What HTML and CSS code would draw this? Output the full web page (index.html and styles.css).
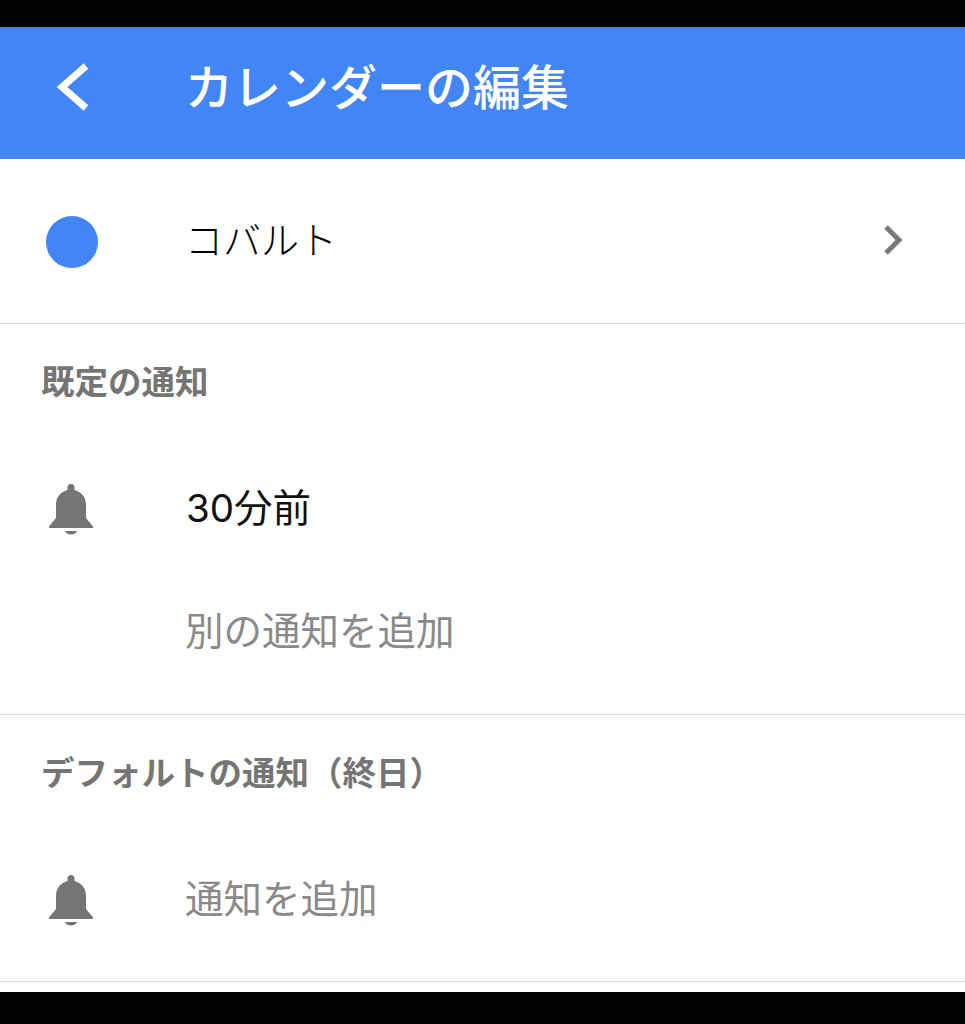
FILE: index.html
```html
<!DOCTYPE html>
<html lang="ja">
<head>
<meta charset="utf-8">
<title>カレンダーの編集</title>
<link rel="stylesheet" href="styles.css">
</head>
<body>
<div class="screen">
  <header class="appbar">
    <svg class="back" viewBox="0 0 40 52" width="40" height="52"><path d="M33 5 L9 26 L33 47" fill="none" stroke="#fff" stroke-width="7"/></svg>
    <h1 class="title">カレンダーの編集</h1>
  </header>
  <section class="color-row">
    <span class="slot"><span class="dot"></span></span>
    <span class="color-name">コバルト</span>
    <svg class="chev" viewBox="0 0 24 36" width="24" height="36"><path d="M4 5 L17 18 L4 31" fill="none" stroke="#7a7a7a" stroke-width="5"/></svg>
  </section>
  <section class="group group-timed">
    <h2 class="group-title">既定の通知</h2>
    <div class="item item-first">
      <span class="slot"><svg class="bell" viewBox="0 0 48 54" width="48" height="54"><use href="#bell"/></svg></span>
      <span class="value">30分前</span>
    </div>
    <div class="item item-add">
      <span class="slot"></span>
      <span class="muted">別の通知を追加</span>
    </div>
  </section>
  <section class="group group-allday">
    <h2 class="group-title">デフォルトの通知（終日）</h2>
    <div class="item item-first">
      <span class="slot"><svg class="bell" viewBox="0 0 48 54" width="48" height="54"><use href="#bell"/></svg></span>
      <span class="muted">通知を追加</span>
    </div>
  </section>
  <div class="tail"></div>
</div>
<svg class="defs" width="0" height="0"><defs><symbol id="bell" viewBox="0 0 48 54"><path fill="#757575" d="M20.500 5.500a3.500 3.500 0 0 1 7 0V8C35 10 39 15.500 39 23V36L46 44.500V46H2V44.500L9 36V23C9 15.500 13 10 20.500 8Z"/><path fill="#757575" d="M18 49H30C29 53.500 19 53.500 18 49Z"/></symbol></defs></svg>
</body>
</html>
```
FILE: styles.css
```css
* { box-sizing: border-box; }
html, body { margin: 0; padding: 0; background: #000; }
.screen {
  width: 965px;
  height: 1024px;
  padding: 27px 0 32px;
  background: #000;
  font-family: Inter, "Noto Sans CJK JP", sans-serif;
  overflow: hidden;
}
.appbar {
  height: 132px;
  background: #4285f4;
  display: flex;
  align-items: center;
  padding: 0 0 12px 53px;
}
.back { width: 40px; flex: none; }
.title {
  margin: 2px 0 0 92px;
  font-size: 48px;
  font-weight: 500;
  color: #fff;
  line-height: 1;
}
.color-row {
  height: 165px;
  background: #fff;
  border-bottom: 1px solid #dcdcdc;
  display: flex;
  align-items: center;
  padding: 1px 59px 0 0;
}
.slot {
  width: 186px;
  padding-left: 46px;
  flex: none;
  display: flex;
  align-items: center;
}
.dot { width: 52px; height: 52px; border-radius: 50%; background: #4285f4; }
.color-name { font-size: 38px; color: #000; flex: 1; font-weight: 300; line-height: 1; margin: 0 0 4px -1px; }
.chev { flex: none; margin-bottom: 3px; }
.group { background: #fff; border-bottom: 1px solid #dcdcdc; }
.group-timed { height: 391px; }
.group-allday { height: 267px; }
.group-title {
  margin: 0;
  padding: 38px 0 0 41px;
  font-size: 33.500px;
  line-height: 40px;
  font-weight: 700;
  color: #757575;
}
.item { display: flex; align-items: center; height: 62px; }
.item-first { margin-top: 76px; }
.item-add { margin-top: 61px; }
.bell { display: block; width: 48px; height: 54px; margin-left: 0.500px; }
.value { font-size: 38.500px; color: #111; font-weight: 400; line-height: 1; margin-bottom: 2px; }
.muted { font-size: 38.500px; color: #8a8a8a; font-weight: 400; line-height: 1; margin: 0 0 2px -1px; }
.tail { height: 10px; background: #fff; }
.defs { position: absolute; }
```
